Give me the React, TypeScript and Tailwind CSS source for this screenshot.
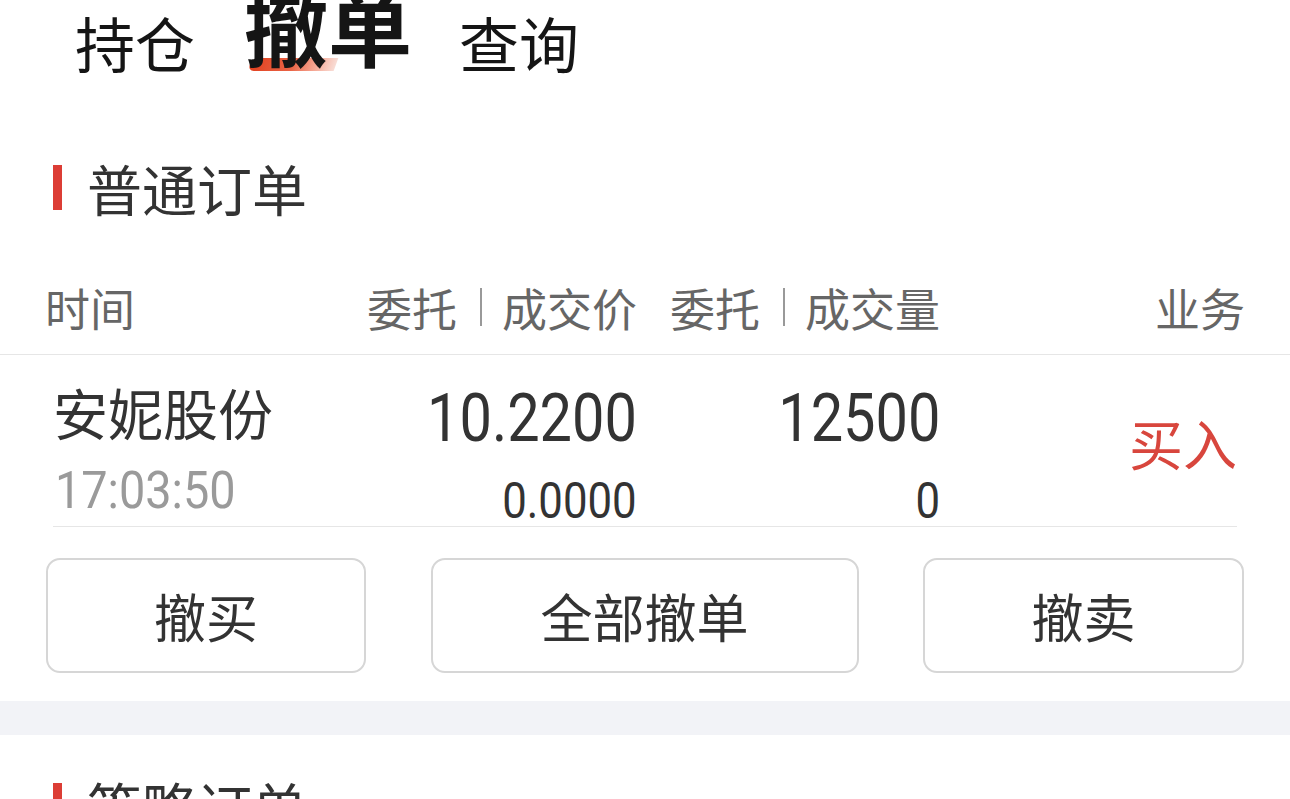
import React from 'react'

const cjk = "font-['Noto_Sans_CJK_SC',sans-serif]"
const num = "font-['Roboto',sans-serif]"

function Num({ v, className }: { v: string; className: string }) {
  return <span className={`${num} ${className} block leading-none`}>{v}</span>
}

function SectionTitle({ title }: { title: string }) {
  return (
    <div className="flex items-center pl-[53px]">
      <span className="w-[9px] h-[45px] bg-[#dc3d35]" />
      <span className="ml-[25px] text-[55px] leading-none text-[#333]">{title}</span>
    </div>
  )
}

export default function App() {
  const order = { name: '安妮股份', time: '17:03:50', price: '10.2200', dealPrice: '0.0000', qty: '12500', dealQty: '0', side: '买入' }

  return (
    <div className={`${cjk} w-[1290px] h-[799px] overflow-hidden bg-white`}>
      {/* tabs */}
      <div className="h-[120px]">
        <div className="h-[72px] flex items-end pl-[75px] text-[#151515]">
          <span className="text-[60px] leading-none">持仓</span>
          <span className="relative ml-[49px] mb-[5px] text-[84px] font-bold leading-none">
            <span className="absolute left-[6px] bottom-[-4px] w-[86px] h-[13px] rounded-l-[6px] skew-x-[-20deg] bg-gradient-to-r from-[#e23f1c] via-[#e96446] to-[#f8ddd6]" />
            <span className="relative">撤单</span>
          </span>
          <span className="ml-[47px] text-[60px] leading-none">查询</span>
        </div>
      </div>

      {/* 普通订单 */}
      <div className="h-[134px] flex items-center">
        <SectionTitle title="普通订单" />
      </div>

      <div className="h-[101px] pt-[6px] flex items-center px-[45px] border-b border-[#e6e6e6] text-[45px] leading-none text-[#666]">
        <div className="w-[592px] flex items-center justify-between">
          <span>时间</span>
          <span className="flex items-center">
            委托<span className="ml-[23px] mr-[20px] w-[2px] h-[38px] bg-[#999]" />成交价
          </span>
        </div>
        <div className="w-[303px] flex items-center justify-end">
          委托<span className="ml-[23px] mr-[20px] w-[2px] h-[38px] bg-[#999]" />成交量
        </div>
        <div className="flex-1 flex justify-end">业务</div>
      </div>

      {/* order row */}
      <div className="mx-[53px] h-[172px] flex border-b border-[#e6e6e6]">
        <div className="w-[347px] pt-[29px]">
          <div className="text-[55px] leading-none text-[#333]">{order.name}</div>
          <Num v={order.time} className="mt-[26px] ml-[2px] text-[52px] text-[#9a9a9a] origin-left scale-x-[0.9]" />
        </div>
        <div className="w-[237px] pt-[31px] flex flex-col items-end">
          <Num v={order.price} className="text-[66px] text-[#333] origin-right scale-x-[0.875]" />
          <Num v={order.dealPrice} className="mt-[24px] text-[50px] text-[#333] origin-right scale-x-[0.875]" />
        </div>
        <div className="w-[303px] pt-[31px] flex flex-col items-end">
          <Num v={order.qty} className="text-[66px] text-[#333] origin-right scale-x-[0.875]" />
          <Num v={order.dealQty} className="mt-[24px] text-[50px] text-[#333] origin-right scale-x-[0.875]" />
        </div>
        <div className="flex-1 pt-[4px] flex items-center justify-end text-[54px] leading-none text-[#d8463d]">{order.side}</div>
      </div>

      {/* buttons */}
      <div className="h-[174px] pt-[31px] px-[46px] flex justify-between items-start">
        {[
          { t: '撤买', w: 'w-[320px]' },
          { t: '全部撤单', w: 'w-[428px]' },
          { t: '撤卖', w: 'w-[321px]' },
        ].map((b) => (
          <button key={b.t} className={`${b.w} h-[115px] rounded-[14px] border-2 border-[#d6d6d6] bg-white text-[52px] leading-none text-[#333] flex items-center justify-center`}>
            {b.t}
          </button>
        ))}
      </div>

      <div className="h-[34px] bg-[#f2f3f7]" />

      {/* 策略订单 */}
      <div className="h-[134px] pt-[6px] flex items-center">
        <SectionTitle title="策略订单" />
      </div>
    </div>
  )
}
